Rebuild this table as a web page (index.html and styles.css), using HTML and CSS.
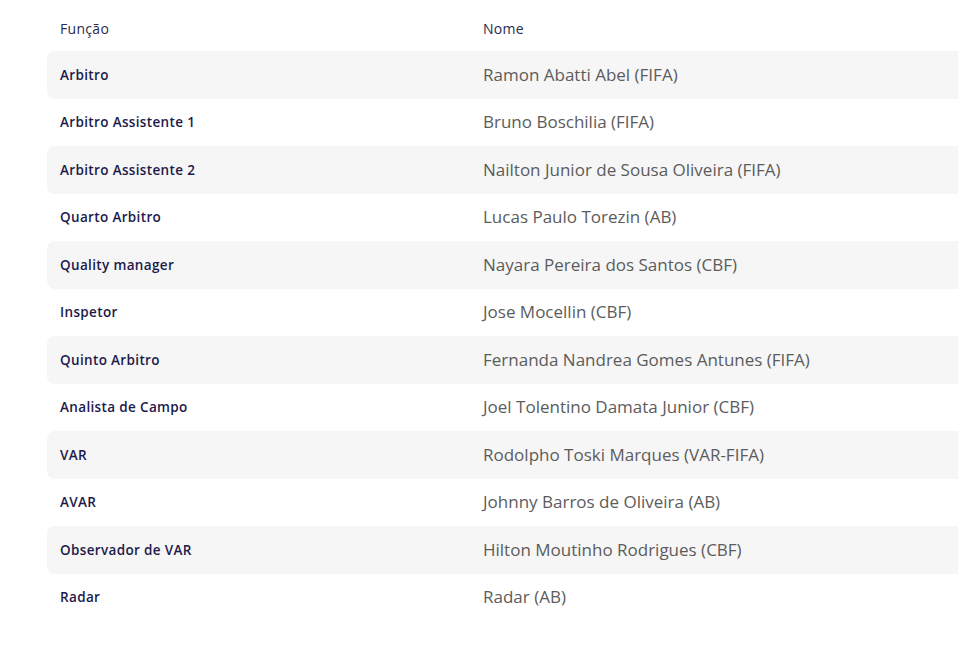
FILE: index.html
```html
<!DOCTYPE html>
<html lang="pt">
<head>
<meta charset="utf-8">
<title>Arbitragem</title>
<link rel="stylesheet" href="styles.css">
</head>
<body>
<div class="table">
  <div class="head">
    <div class="col-role">Função</div>
    <div class="col-name">Nome</div>
  </div>
  <div class="row"><div class="col-role role">Arbitro</div><div class="col-name name">Ramon Abatti Abel (FIFA)</div></div>
  <div class="row"><div class="col-role role">Arbitro Assistente 1</div><div class="col-name name">Bruno Boschilia (FIFA)</div></div>
  <div class="row"><div class="col-role role">Arbitro Assistente 2</div><div class="col-name name">Nailton Junior de Sousa Oliveira (FIFA)</div></div>
  <div class="row"><div class="col-role role">Quarto Arbitro</div><div class="col-name name">Lucas Paulo Torezin (AB)</div></div>
  <div class="row"><div class="col-role role">Quality manager</div><div class="col-name name">Nayara Pereira dos Santos (CBF)</div></div>
  <div class="row"><div class="col-role role">Inspetor</div><div class="col-name name">Jose Mocellin (CBF)</div></div>
  <div class="row"><div class="col-role role">Quinto Arbitro</div><div class="col-name name">Fernanda Nandrea Gomes Antunes (FIFA)</div></div>
  <div class="row"><div class="col-role role">Analista de Campo</div><div class="col-name name">Joel Tolentino Damata Junior (CBF)</div></div>
  <div class="row"><div class="col-role role">VAR</div><div class="col-name name">Rodolpho Toski Marques (VAR-FIFA)</div></div>
  <div class="row"><div class="col-role role">AVAR</div><div class="col-name name">Johnny Barros de Oliveira (AB)</div></div>
  <div class="row"><div class="col-role role">Observador de VAR</div><div class="col-name name">Hilton Moutinho Rodrigues (CBF)</div></div>
  <div class="row"><div class="col-role role">Radar</div><div class="col-name name">Radar (AB)</div></div>
</div>
</body>
</html>
```
FILE: styles.css
```css
html, body {
  margin: 0;
  padding: 0;
  background: #ffffff;
  overflow: hidden;
}
body {
  font-family: "Open Sans", "Liberation Sans", sans-serif;
  padding-left: 47px;
}
.table {
  display: flex;
  flex-direction: column;
}
.head {
  display: flex;
  align-items: center;
  height: 51px;
  padding-top: 6px;
  box-sizing: border-box;
  font-size: 14px;
  letter-spacing: 0.3px;
  color: #2b2a4c;
}
.row {
  display: flex;
  align-items: center;
  height: 47.5px;
  border-radius: 8px 0 0 8px;
}
.row:nth-child(even) {
  background: #f6f6f6;
}
.col-role {
  width: 436px;
  padding-left: 13px;
  box-sizing: border-box;
  flex: none;
}
.col-name {
  flex: 1;
}
.role {
  font-size: 13.5px;
  font-weight: 600;
  color: #1d1a4b;
  letter-spacing: 0.35px;
}
.name {
  font-size: 17px;
  color: #5c5c5c;
  padding-bottom: 1px;
}
```
